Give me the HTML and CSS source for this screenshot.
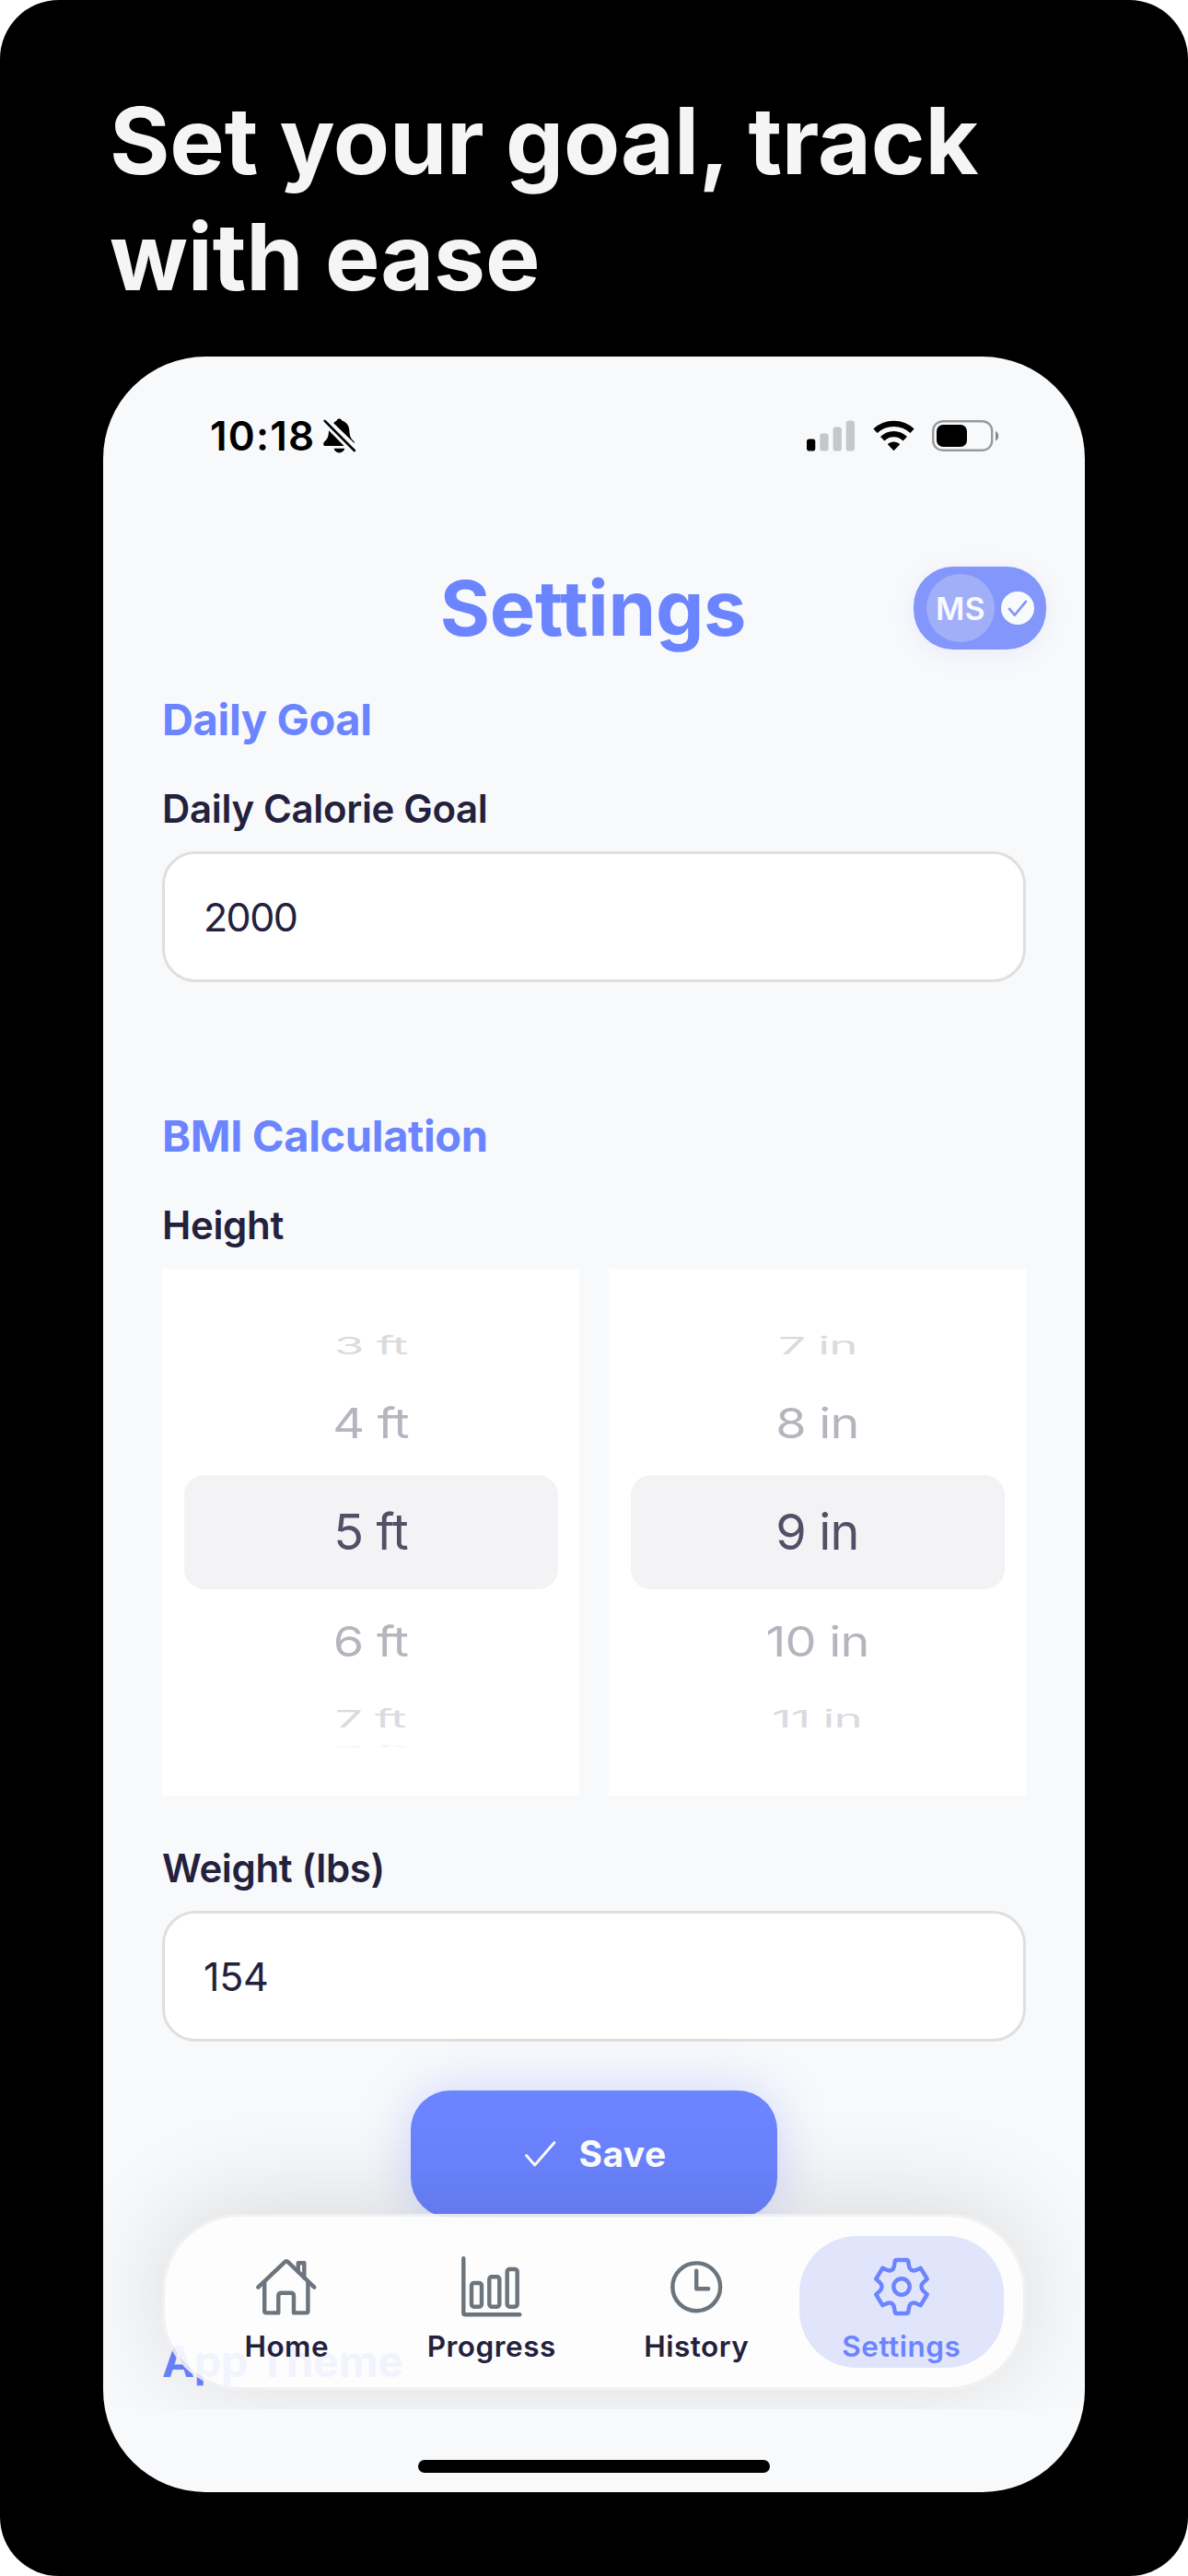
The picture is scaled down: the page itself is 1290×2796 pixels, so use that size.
FILE: index.html
```html
<!DOCTYPE html>
<html lang="en">
<head>
  <meta charset="utf-8">
  <title>Settings</title>
  <link rel="stylesheet" href="styles.css">
</head>
<body>
  <main class="poster">
    <h1 class="headline">Set your goal, track<br>with ease</h1>

    <div class="phone">
      <div class="screen">
        <div class="status">
          <span class="status-time">10:18</span>
          <svg class="status-bell" width="36" height="38" viewBox="0 0 36 38">
            <path d="M11.2 5.2C12.5 3.5 13.6 3 14.6 2.4 15.2 1 16.1.4 17.4.4s2.2.6 2.8 2c4.600 1.300 7.700 5 8.100 10.400.300 6.600 1.500 9 4.500 11.800.800.800 1.200 1.500 1.200 2.600z"/>
            <path d="M6 13.200 22.700 30H2.400C.900 30 .200 29.100.200 27.900c0-1.500.800-2.200 2-3.400C4.800 22 5.800 19.500 6 13.200z"/>
            <path d="M11.600 32.800h11.600c-.400 2.700-2.900 4.600-5.800 4.600s-5.400-1.900-5.800-4.600z"/>
            <path d="M1.700 2.800 33.800 35" fill="none" stroke="#000" stroke-width="2.600" stroke-linecap="round"/>
          </svg>
          <div class="status-icons">
            <svg width="52" height="34" viewBox="0 0 52 34">
              <rect x="0" y="20.500" width="9.300" height="13" rx="2.800"/>
              <g fill="#c6c7c9">
                <rect x="14.300" y="14.500" width="9.300" height="19" rx="2.800"/>
                <rect x="28.600" y="7.500" width="9.300" height="26" rx="2.800"/>
                <rect x="42.700" y=".5" width="9.300" height="33" rx="2.800"/>
              </g>
            </svg>
            <svg width="45" height="34" viewBox="0 0 45 34">
              <g fill="none" stroke="#000" stroke-width="6.200">
                <path d="M2.500 11.800C13.500 1.200 31.500 1.200 42.500 11.800"/>
                <path d="M10.200 20.200C17 13.300 28 13.300 34.800 20.200"/>
              </g>
              <path d="M15.800 26.200c3.700-3.500 9.700-3.500 13.400 0L22.500 33.300z"/>
            </svg>
            <svg width="73" height="34" viewBox="0 0 73 34">
              <rect x="1.200" y="1.200" width="64" height="31.600" rx="10.500" fill="none" stroke="#98999b" stroke-width="2.400"/>
              <rect x="5" y="5" width="33" height="24" rx="7"/>
              <path d="M69 12c4.300 1.600 4.300 8.800 0 10.400z" fill="#87888a"/>
            </svg>
          </div>
        </div>

        <header class="header">
          <h2 class="title">Settings</h2>
          <div class="account">
            <span class="avatar">MS</span>
            <svg class="account-check" width="36" height="36" viewBox="0 0 36 36">
              <circle cx="18" cy="18" r="18" fill="#f9fafc"/>
              <path d="M9 18.800 14.800 25.600 27 10.800" fill="none" stroke="#8296fb" stroke-width="2.600" stroke-linecap="round" stroke-linejoin="round"/>
            </svg>
          </div>
        </header>

        <section class="form">
          <h3 class="section-title">Daily Goal</h3>
          <div class="label">Daily Calorie Goal</div>
          <div class="field goal-field">2000</div>

          <h3 class="section-title bmi-title">BMI Calculation</h3>
          <div class="label">Height</div>
          <div class="pickers">
            <div class="picker">
              <div class="row far"><span>3 ft</span></div>
              <div class="row near"><span>4 ft</span></div>
              <div class="row selected"><span>5 ft</span></div>
              <div class="row near below"><span>6 ft</span></div>
              <div class="row far below"><span>7 ft</span></div>
              <div class="row edge"><span>8 ft</span></div>
            </div>
            <div class="picker">
              <div class="row far"><span>7 in</span></div>
              <div class="row near"><span>8 in</span></div>
              <div class="row selected"><span>9 in</span></div>
              <div class="row near below"><span>10 in</span></div>
              <div class="row far below"><span>11 in</span></div>
            </div>
          </div>

          <div class="label weight-label">Weight (lbs)</div>
          <div class="field">154</div>

          <div class="save">
            <svg width="36" height="30" viewBox="0 0 36 30">
              <path d="M2.500 16.500 11.700 27 33 2.500" fill="none" stroke="#fff" stroke-width="2.900" stroke-linecap="round" stroke-linejoin="round"/>
            </svg>
            <span>Save</span>
          </div>

          <h3 class="section-title theme-title">App Theme</h3>
        </section>

        <nav class="tabs">
          <div class="tab">
            <svg class="icon" viewBox="0 0 70 70">
              <path d="M4.300 35.700 33.300 8.200Q35 6.600 36.700 8.200L65.300 35.700"/>
              <path d="M11.200 30V61.500q0 1.900 1.900 1.900H26.300V45q0-3.300 3.300-3.300H39.700q3.300 0 3.300 3.300V63.400H56.500q1.900 0 1.900-1.900V30"/>
              <path d="M47.800 18.500V9.200h6.500v16"/>
            </svg>
            <span>Home</span>
          </div>
          <div class="tab">
            <svg class="icon" viewBox="0 0 70 70">
              <path d="M4.300 4.300V63.500q0 1.800 1.800 1.800H65.300"/>
              <rect x="13" y="31" width="11" height="25.700" rx="2.600"/>
              <rect x="32.300" y="24.300" width="11" height="32.400" rx="2.600"/>
              <rect x="51.700" y="16" width="11" height="40.700" rx="2.600"/>
            </svg>
            <span>Progress</span>
          </div>
          <div class="tab">
            <svg class="icon" viewBox="0 0 70 70">
              <circle cx="35.200" cy="35.300" r="25.900"/>
              <path d="M35.200 17.600V37.300H48.200"/>
            </svg>
            <span>History</span>
          </div>
          <div class="tab active">
            <svg class="icon" viewBox="0 0 70 70">
              <path d="M29.500 6H40.500Q42 6 42.200 7.500L43.300 13.500Q44 16.500 47 17.300 48.800 17.800 50.500 17L55.700 14.800 62.800 26.700 58.600 30.300Q56.500 32.300 56.500 35T58.600 39.700L62.800 43.300 55.700 55.200 50.500 53Q48.800 52.200 47 52.700 44 53.500 43.300 56.500L42.200 62.500Q42 64 40.500 64H29.500Q28 64 27.800 62.500L26.700 56.500Q26 53.500 23 52.700 21.200 52.200 19.500 53L14.300 55.200 7.200 43.300 11.400 39.700Q13.500 37.700 13.500 35T11.400 30.300L7.200 26.700 14.300 14.800 19.500 17Q21.200 17.800 23 17.300 26 16.500 26.700 13.500L27.800 7.500Q28 6 29.500 6Z"/>
              <circle cx="35" cy="35" r="8.700"/>
            </svg>
            <span>Settings</span>
          </div>
        </nav>
      </div>
      <div class="home-indicator"></div>
    </div>
  </main>
</body>
</html>
```
FILE: styles.css
```css
:root {
  --accent: #6b84ff;
  --ink: #23213d;
  --surface: #f8f9fb;
}

* {
  box-sizing: border-box;
}

body {
  margin: 0;
  background: #fff;
  font-family: Inter, "Liberation Sans", sans-serif;
  color: var(--ink);
}

h1, h2, h3 {
  margin: 0;
}

svg {
  display: block;
  flex: none;
}

.poster {
  width: 1290px;
  height: 2796px;
  padding-top: 90px;
  border-radius: 64px;
  background: #000;
}

.headline {
  margin-left: 119px;
  font-size: 100px;
  font-weight: 700;
  line-height: 126px;
  letter-spacing: -0.2px;
  color: #f5f5f5;
}

.phone {
  display: flex;
  flex-direction: column;
  align-items: center;
  width: 1066px;
  height: 2318px;
  margin: 45px auto 0;
  border-radius: 111px;
  background: var(--surface);
  overflow: hidden;
}

.screen {
  position: relative;
  flex: none;
  width: 100%;
  height: 2228px;
  overflow: hidden;
}

.status {
  display: flex;
  align-items: center;
  height: 113px;
  padding: 59px 93px 0 116px;
}

.status-time {
  font-size: 44px;
  font-weight: 600;
  line-height: 54px;
  letter-spacing: 1.18px;
  color: #000;
}

.status-bell {
  margin-left: 9px;
}

.status-icons {
  display: flex;
  align-items: center;
  gap: 19.5px;
  margin-left: auto;
}

.header {
  display: grid;
  grid-template-columns: 1fr auto 1fr;
  align-items: center;
  margin-top: 115px;
  padding: 0 42px;
}

.title {
  grid-column: 2;
  margin-right: 2px;
  font-size: 83px;
  font-weight: 700;
  line-height: 90px;
  letter-spacing: -0.27px;
  color: var(--accent);
}

.account {
  display: flex;
  align-items: center;
  justify-self: end;
  gap: 6.5px;
  width: 144px;
  height: 90px;
  padding-left: 14px;
  border-radius: 43px;
  background: #8296fb;
  box-shadow: 0 5px 27px rgba(107, 132, 255, 0.1);
}

.avatar {
  display: flex;
  align-items: center;
  justify-content: center;
  width: 74px;
  height: 74px;
  border-radius: 50%;
  background: #a1aff9;
  font-size: 34px;
  font-weight: 600;
  letter-spacing: 0.3px;
  color: #f9fafc;
}

.form {
  padding: 48px 64px 0;
}

.section-title {
  font-size: 47px;
  font-weight: 700;
  line-height: 56px;
  letter-spacing: -0.35px;
  color: var(--accent);
}

.label {
  margin-top: 44px;
  font-size: 42px;
  font-weight: 600;
  line-height: 50px;
  letter-spacing: -0.35px;
}

.field {
  display: flex;
  align-items: center;
  height: 142px;
  margin-top: 21px;
  padding-left: 42px;
  border: 3px solid #dfdfdf;
  border-radius: 36px;
  background: #fff;
  font-size: 43px;
  letter-spacing: -0.3px;
}

.goal-field {
  letter-spacing: -1.6px;
}

.bmi-title {
  margin-top: 139px;
}

.pickers {
  display: grid;
  grid-template-columns: 1fr 1fr;
  gap: 32px;
  margin-top: 22px;
}

.picker {
  height: 572px;
  padding: 55px 23.5px 0;
  background: #fff;
}

.row {
  display: flex;
  align-items: center;
  justify-content: center;
  font-size: 54px;
  line-height: 1;
  letter-spacing: -0.8px;
}

.selected {
  height: 124px;
  border-radius: 22px;
  background: #f3f3f5;
  color: #525066;
}

.near {
  height: 112px;
  color: #b6b5be;
}

.near span {
  transform: scaleY(0.84);
}

.near.below {
  height: 114px;
}

.far {
  height: 57px;
  color: #dadadf;
}

.far span {
  transform: scale(0.98, 0.48);
}

.far.below {
  height: 54px;
}

.edge {
  height: 6px;
  color: #f4f4f6;
}

.edge span {
  transform: scaleY(0.04);
}

.weight-label {
  margin-top: 54px;
}

.save {
  display: flex;
  align-items: center;
  justify-content: center;
  gap: 23px;
  width: 398px;
  height: 138px;
  margin: 52.5px auto 0;
  padding-left: 3px;
  border-radius: 43px;
  background: var(--accent);
  box-shadow: 0 0 54px rgba(107, 132, 255, 0.3);
  font-size: 39px;
  font-weight: 700;
  letter-spacing: 0.4px;
  color: #fff;
}

.theme-title {
  margin-top: 128px;
}

/* Floating tab bar, laid over the scrolled form */
.tabs {
  position: absolute;
  right: 64px;
  bottom: 21.5px;
  left: 64px;
  display: grid;
  grid-template-columns: repeat(4, 1fr);
  height: 191px;
  padding: 21px;
  border: 3px solid rgba(240, 240, 241, 0.9);
  border-radius: 84px;
  background: rgba(253, 253, 253, 0.92) padding-box;
  box-shadow: 0 -10px 110px rgba(0, 0, 0, 0.13);
}

.tab {
  display: flex;
  flex-direction: column;
  align-items: center;
  gap: 11px;
  padding-top: 20.5px;
  border-radius: 62px;
  font-size: 31.5px;
  font-weight: 600;
  line-height: 38px;
  letter-spacing: 0.5px;
}

.icon {
  width: 70px;
  height: 70px;
  fill: none;
  stroke: #6c757d;
  stroke-width: 4.4;
  stroke-linecap: round;
  stroke-linejoin: round;
}

.active {
  background: #e1e5fc;
  color: var(--accent);
}

.active .icon {
  stroke: var(--accent);
}

.home-indicator {
  flex: none;
  width: 382px;
  height: 13.5px;
  margin-top: 55px;
  border-radius: 7px;
  background: #000;
}
```
